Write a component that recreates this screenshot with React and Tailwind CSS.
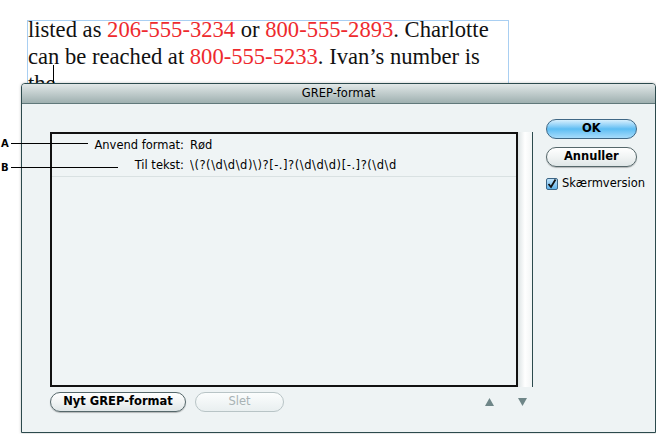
import React from "react";

const ui = { fontFamily: '"DejaVu Sans", "Liberation Sans", sans-serif' };
const serif = { fontFamily: '"Liberation Serif", "Times New Roman", serif' };

function PillButton({ children, primary, disabled, className = "" }) {
  const base =
    "flex items-center justify-center rounded-full text-[11.5px] h-[20px] border";
  if (primary) {
    return (
      <div
        className={`${base} ${className} border-[#3f6785] bg-gradient-to-b from-[#d6effd] via-[#5cbdf3] to-[#a6dcfb] text-black font-bold`}
      >
        {children}
      </div>
    );
  }
  if (disabled) {
    return (
      <div
        className={`${base} ${className} border-[#b8c4c6] bg-gradient-to-b from-[#fbfdfd] to-[#e9eff0] text-[#a8b2b4]`}
      >
        {children}
      </div>
    );
  }
  return (
    <div
      className={`${base} ${className} border-[#55676a] bg-gradient-to-b from-[#ffffff] via-[#f1f4f4] to-[#dfe6e7] text-black font-bold shadow-[0_1px_1px_rgba(0,0,0,0.25)]`}
    >
      {children}
    </div>
  );
}

export default function App() {
  return (
    <div className="relative w-[656px] h-[434px] overflow-hidden bg-white">
      {/* text frame in the layout behind the dialog */}
      <div className="ml-[27px] mt-[20px] w-[482px] h-[80px] border-l border-t border-r border-[#a9cff2]">
        <p
          className="text-[22.6px] leading-[27px] text-[#111] -mt-[5px] whitespace-nowrap"
          style={serif}
        >
          listed as <span className="text-[#ee2a2e]">206-555-3234</span> or{" "}
          <span className="text-[#ee2a2e]">800-555-2893</span>. Charlotte
          <br />
          can be reached at <span className="text-[#ee2a2e]">800-555-5233</span>.
          Ivan’s number is
          <br />
          the
        </p>
      </div>
      {/* text cursor */}
      <div className="absolute left-[53px] top-[65px] w-[1px] h-[18px] bg-black" />

      {/* dialog window */}
      <div
        className="absolute left-[21px] top-[83px] w-[635px] h-[350px] border border-[#2c4a4d] rounded-t-[4px] bg-[#eef3f4] flex flex-col shadow-[0_0_3px_rgba(0,0,0,0.25)]"
        style={ui}
      >
        <div className="h-[20px] shrink-0 rounded-t-[3px] bg-gradient-to-b from-[#e2e8e8] to-[#9fb0b0] border-b border-[#60787a] flex items-center justify-center text-[11.5px] text-black">
          GREP-format
        </div>
        <div className="flex flex-1 pl-[28px] pr-[10px] pt-[14px]">
          {/* left column */}
          <div className="flex flex-col w-[484px]">
            <div className="flex mt-[14px] h-[255px]">
              <div className="flex-1 border-2 border-[#111] bg-[#eff4f5] flex flex-col text-[11.5px] text-black">
                <div className="grid grid-cols-[132px_1fr] gap-x-[6px] pt-[1px]">
                  <div className="text-right h-[20px] leading-[20px]">Anvend format:</div>
                  <div className="h-[20px] leading-[20px]">Rød</div>
                  <div className="text-right h-[20px] leading-[20px]">Til tekst:</div>
                  <div className="h-[20px] leading-[20px] w-[206px] overflow-hidden whitespace-nowrap tracking-[0.55px]">
                    {"\\(?(\\d\\d\\d)\\)?[-.]?(\\d\\d\\d)[-.]?(\\d\\d\\d\\d)"}
                  </div>
                </div>
                <div className="h-[1px] bg-[#d9e1e2] mt-[1px]" />
              </div>
              <div className="w-[15px] border-r border-[#2c4a4d] bg-gradient-to-r from-[#dde4e5] via-[#ffffff] to-[#f2f5f5]" />
            </div>
            <div className="flex items-center mt-[5px]">
              <PillButton className="w-[136px]">Nyt GREP-format</PillButton>
              <PillButton disabled className="w-[89px] ml-[9px]">
                Slet
              </PillButton>
              <div className="flex-1" />
              <svg width="9" height="8" viewBox="0 0 9 8" className="mr-[24px]">
                <polygon points="4.5,0 9,8 0,8" fill="#6f8688" />
              </svg>
              <svg width="9" height="8" viewBox="0 0 9 8" className="mr-[6px]">
                <polygon points="0,0 9,0 4.5,8" fill="#6f8688" />
              </svg>
            </div>
          </div>
          {/* right column */}
          <div className="flex flex-col ml-[13px] pt-[1px]">
            <PillButton primary className="w-[91px]">
              OK
            </PillButton>
            <PillButton className="w-[91px] mt-[8px]">Annuller</PillButton>
            <div className="flex items-center mt-[8px] text-[11.5px] text-black">
              <div className="w-[12px] h-[12px] rounded-[2px] border border-[#3c6585] bg-gradient-to-b from-[#bfe3fb] to-[#5fb3ea] flex items-center justify-center">
                <svg width="10" height="10" viewBox="0 0 10 10">
                  <path d="M1.5 5 L4 8 L8.5 0.5" stroke="#111" strokeWidth="1.8" fill="none" />
                </svg>
              </div>
              <span className="ml-[4px]">Skærmversion</span>
            </div>
          </div>
        </div>
      </div>

      {/* callouts A and B */}
      <div className="absolute left-[1px] top-[136px] flex items-center" style={ui}>
        <span className="text-[10px] font-bold text-black w-[10px]">A</span>
        <div className="w-[77px] h-[1px] bg-black" />
      </div>
      <div className="absolute left-[1px] top-[160px] flex items-center" style={ui}>
        <span className="text-[10px] font-bold text-black w-[10px]">B</span>
        <div className="w-[107px] h-[1px] bg-black" />
      </div>
    </div>
  );
}
